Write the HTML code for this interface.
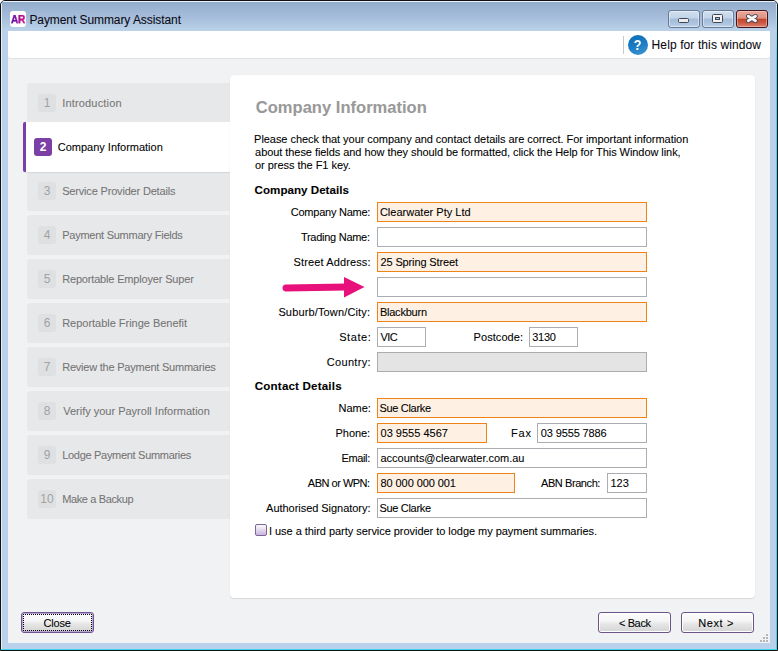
<!DOCTYPE html><html><head><meta charset="utf-8"><style>
*{margin:0;padding:0;box-sizing:border-box}
html,body{width:778px;height:651px;overflow:hidden;background:#fff}
body{font-family:"Liberation Sans",sans-serif;font-size:11px;color:#000;position:relative}
div{position:absolute}
.t{white-space:pre;line-height:13px;-webkit-text-stroke:0.08px currentColor}
.nav{left:27px;width:203px;height:40px;background:#e7e8ea;border-radius:3px 0 0 3px}
.n{width:18px;height:18px;border-radius:3px;background:#dfe0e2;color:#a2a2a2;text-align:center;line-height:18px;font-size:12px}
.nl{color:#757575}
.fld{height:20px;border:1px solid #abadb3;background:#fff}
.fld.o{border-color:#ee8418;background:#fef0e3}
.fld.g{background:#e4e4e4;border-color:#acacac}
.btn{height:21px;border:1px solid #6a5488;border-radius:3px;box-shadow:inset 0 0 0 1px #fff;background:linear-gradient(#fcfcfc,#f5f5f5 42%,#e6e6e6 58%,#d4d4d4)}
</style></head><body>
<div style="left:0;top:0;width:778px;height:651px;border:1px solid #111;border-radius:5px 5px 0 0;background:#b9d1ea"></div>
<div style="left:1px;top:1px;width:776px;height:30px;border-radius:4px 4px 0 0;background:linear-gradient(#e9f0f8 0px,#e9f0f8 1px,#93adcc 1px,#a4bcd9 50%,#bbd2ea 100%)"></div>
<div style="left:1px;top:4px;width:1px;height:646px;background:#e6eef7"></div>
<div style="left:776px;top:4px;width:1px;height:646px;background:linear-gradient(#cfe8f4,#3ad6ee 60px)"></div>
<div style="left:1px;top:649px;width:776px;height:1px;background:#3ad6ee"></div>
<div style="left:8px;top:31px;width:762px;height:612px;background:#f1f2f4"></div>
<div style="left:8px;top:31px;width:762px;height:27px;background:#fff;border-radius:0 0 3px 3px;box-shadow:0 1px 1px rgba(0,0,0,0.07)"></div>
<div style="left:10px;top:11px;width:16px;height:16px;background:#fff;border-radius:3px"></div>
<div class="t" style="left:11px;top:14px;font-size:10px;font-weight:bold;line-height:12px;letter-spacing:-0.3px;background:linear-gradient(90deg,#5a0fb0,#7d10ac 40%,#c0108e 60%,#e8107a);-webkit-background-clip:text;background-clip:text;color:transparent;-webkit-text-stroke:0.25px #7a10a0">AR</div>
<div class="t" style="left:29.4px;top:13px;letter-spacing:-0.075px;line-height:14px;font-size:12px;color:#0a0a14">Payment Summary Assistant</div>
<div style="left:668px;top:10px;width:32px;height:18px;border:1px solid #687a94;border-radius:3px;box-shadow:inset 0 0 0 1px rgba(255,255,255,0.45);background:linear-gradient(#d0deef,#c2d4e9 46%,#a3bbd8 48%,#acc3de 75%,#bcd0e8)"></div>
<div style="left:702px;top:10px;width:32px;height:18px;border:1px solid #687a94;border-radius:3px;box-shadow:inset 0 0 0 1px rgba(255,255,255,0.45);background:linear-gradient(#d0deef,#c2d4e9 46%,#a3bbd8 48%,#acc3de 75%,#bcd0e8)"></div>
<div style="left:678px;top:18px;width:11px;height:5px;background:#ececec;border:1px solid #3e4656;border-radius:1.5px"></div>
<div style="left:712px;top:14px;width:11px;height:9px;background:#f2f2f2;border:1.3px solid #3e4656;border-radius:1.5px"></div>
<div style="left:715px;top:17px;width:5px;height:3px;background:#a9c1dc;border:1px solid #3e4656"></div>
<div style="left:736px;top:10px;width:32px;height:18px;border:1px solid #43161c;border-radius:3px;box-shadow:inset 0 0 0 1px rgba(255,220,210,0.45);background:linear-gradient(#eba99b,#df9080 46%,#c0442a 49%,#c9573e 72%,#db8170)"></div>
<svg style="position:absolute;left:0;top:0" width="778" height="40"><path d="M748.3,16.3 L755.5,20.7 M755.5,16.3 L748.3,20.7" stroke="#3e4656" stroke-width="4.6" stroke-linecap="round"/><path d="M748.3,16.3 L755.5,20.7 M755.5,16.3 L748.3,20.7" stroke="#f6f6f6" stroke-width="2.8" stroke-linecap="round"/></svg>
<div style="left:623px;top:36px;width:1px;height:18px;background:#c8c8c8"></div>
<div style="left:628px;top:35px;width:20px;height:20px;border-radius:50%;background:linear-gradient(160deg,#0a6db6,#1a7cc4 50%,#4196d2)"></div>
<div class="t" style="left:632.9px;top:36.8px;font-size:15px;line-height:15px;font-weight:bold;color:#fff;transform:scaleX(0.85)">?</div>
<div class="t" style="left:651.6px;top:38px;letter-spacing:0.105px;line-height:14px;font-size:12px;color:#0a0a14">Help for this window</div>
<div class="nav" style="top:83px"></div>
<div class="n" style="left:38px;top:94px">1</div>
<div class="t" style="left:62.2px;top:97px;letter-spacing:0.173px;line-height:13px;color:#757575">Introduction</div>
<div class="nav" style="top:171px"></div>
<div class="n" style="left:38px;top:182px">3</div>
<div class="t" style="left:62.2px;top:185px;letter-spacing:-0.178px;line-height:13px;color:#757575">Service Provider Details</div>
<div class="nav" style="top:215px"></div>
<div class="n" style="left:38px;top:226px">4</div>
<div class="t" style="left:62.2px;top:229px;letter-spacing:-0.252px;line-height:13px;color:#757575">Payment Summary Fields</div>
<div class="nav" style="top:259px"></div>
<div class="n" style="left:38px;top:270px">5</div>
<div class="t" style="left:62.2px;top:273px;letter-spacing:-0.171px;line-height:13px;color:#757575">Reportable Employer Super</div>
<div class="nav" style="top:303px"></div>
<div class="n" style="left:38px;top:314px">6</div>
<div class="t" style="left:62.2px;top:317px;letter-spacing:-0.021px;line-height:13px;color:#757575">Reportable Fringe Benefit</div>
<div class="nav" style="top:347px"></div>
<div class="n" style="left:38px;top:358px">7</div>
<div class="t" style="left:62.2px;top:361px;letter-spacing:-0.219px;line-height:13px;color:#757575">Review the Payment Summaries</div>
<div class="nav" style="top:391px"></div>
<div class="n" style="left:38px;top:402px">8</div>
<div class="t" style="left:63.2px;top:405px;letter-spacing:-0.003px;line-height:13px;color:#757575">Verify your Payroll Information</div>
<div class="nav" style="top:435px"></div>
<div class="n" style="left:38px;top:446px">9</div>
<div class="t" style="left:62.2px;top:449px;letter-spacing:-0.3px;line-height:13px;color:#757575">Lodge Payment Summaries</div>
<div class="nav" style="top:479px"></div>
<div class="n" style="left:38px;top:490px">10</div>
<div class="t" style="left:62.2px;top:493px;letter-spacing:-0.375px;line-height:13px;color:#757575">Make a Backup</div>
<div style="left:23px;top:122px;width:207px;height:50px;background:#fff;border-left:3px solid #7b3fa6;border-radius:2px 0 0 2px;box-shadow:0 1px 1px rgba(0,0,0,0.08)"></div>
<div style="left:34px;top:138px;width:18px;height:18px;border-radius:3px;background:#7b3fa6;color:#fff;text-align:center;line-height:18px;font-size:12px;font-weight:bold">2</div>
<div class="t" style="left:57.8px;top:141px;letter-spacing:-0.011px;line-height:13px;">Company Information</div>
<div style="left:230px;top:75px;width:525px;height:523px;background:#fff;border-radius:4px;box-shadow:0 1px 1px rgba(0,0,0,0.10),0 0 1px rgba(0,0,0,0.10)"></div>
<div class="t" style="left:255.8px;top:98px;letter-spacing:0.028px;line-height:18px;font-size:16.5px;font-weight:bold;color:#999999">Company Information</div>
<div class="t" style="left:254.1px;top:133px;letter-spacing:-0.048px;line-height:13px;">Please check that your company and contact details are correct. For important information</div>
<div class="t" style="left:255.1px;top:146px;letter-spacing:-0.06px;line-height:13px;">about these fields and how they should be formatted, click the Help for This Window link,</div>
<div class="t" style="left:255.0px;top:159px;letter-spacing:-0.037px;line-height:13px;">or press the F1 key.</div>
<div class="t" style="left:254.6px;top:183px;letter-spacing:0.014px;line-height:13px;font-size:11.6px;font-weight:bold">Company Details</div>
<div class="t" style="left:290.8px;top:206px;letter-spacing:-0.242px;line-height:13px;">Company Name:</div>
<div class="fld o" style="left:377px;top:202px;width:270px"></div>
<div class="t" style="left:379.9px;top:206px;letter-spacing:0.018px;line-height:13px;">Clearwater Pty Ltd</div>
<div class="t" style="left:300.9px;top:231px;letter-spacing:-0.267px;line-height:13px;">Trading Name:</div>
<div class="fld " style="left:377px;top:227px;width:270px"></div>
<div class="t" style="left:293.6px;top:256px;letter-spacing:0.121px;line-height:13px;">Street Address:</div>
<div class="fld o" style="left:377px;top:252px;width:270px"></div>
<div class="t" style="left:380.5px;top:256px;letter-spacing:-0.133px;line-height:13px;">25 Spring Street</div>
<div class="fld " style="left:377px;top:277px;width:270px"></div>
<div class="t" style="left:278.4px;top:306px;letter-spacing:0.144px;line-height:13px;">Suburb/Town/City:</div>
<div class="fld o" style="left:377px;top:302px;width:270px"></div>
<div class="t" style="left:379.9px;top:306px;letter-spacing:-0.225px;line-height:13px;">Blackburn</div>
<div class="t" style="left:339.2px;top:331px;letter-spacing:0.58px;line-height:13px;">State:</div>
<div class="fld " style="left:377px;top:327px;width:49px"></div>
<div class="t" style="left:380.5px;top:331px;letter-spacing:-0.6px;line-height:13px;">VIC</div>
<div class="t" style="left:473.6px;top:331px;letter-spacing:0.062px;line-height:13px;">Postcode:</div>
<div class="fld " style="left:529px;top:327px;width:49px"></div>
<div class="t" style="left:532.3px;top:331px;letter-spacing:-0.3px;line-height:13px;">3130</div>
<div class="t" style="left:326.7px;top:356px;letter-spacing:0.343px;line-height:13px;">Country:</div>
<div class="fld g" style="left:377px;top:352px;width:270px"></div>
<div class="t" style="left:254.8px;top:379px;letter-spacing:0.171px;line-height:13px;font-size:11.6px;font-weight:bold">Contact Details</div>
<div class="t" style="left:338.5px;top:402px;letter-spacing:0.0px;line-height:13px;">Name:</div>
<div class="fld o" style="left:377px;top:398px;width:270px"></div>
<div class="t" style="left:379.5px;top:402px;letter-spacing:-0.322px;line-height:13px;">Sue Clarke</div>
<div class="t" style="left:335.6px;top:427px;letter-spacing:-0.06px;line-height:13px;">Phone:</div>
<div class="fld o" style="left:377px;top:423px;width:110px"></div>
<div class="t" style="left:380.5px;top:427px;letter-spacing:0.009px;line-height:13px;">03 9555 4567</div>
<div class="t" style="left:511.0px;top:427px;letter-spacing:0.8px;line-height:13px;">Fax</div>
<div class="fld " style="left:537px;top:423px;width:110px"></div>
<div class="t" style="left:540.8px;top:427px;letter-spacing:-0.127px;line-height:13px;">03 9555 7886</div>
<div class="t" style="left:341.4px;top:452px;letter-spacing:-0.34px;line-height:13px;">Email:</div>
<div class="fld " style="left:377px;top:448px;width:270px"></div>
<div class="t" style="left:380.5px;top:452px;letter-spacing:-0.02px;line-height:13px;">accounts@clearwater.com.au</div>
<div class="t" style="left:307.8px;top:477px;letter-spacing:-0.49px;line-height:13px;">ABN or WPN:</div>
<div class="fld o" style="left:377px;top:473px;width:138px"></div>
<div class="t" style="left:380.5px;top:477px;letter-spacing:-0.077px;line-height:13px;">80 000 000 001</div>
<div class="t" style="left:541.0px;top:477px;letter-spacing:-0.42px;line-height:13px;">ABN Branch:</div>
<div class="fld " style="left:607px;top:473px;width:40px"></div>
<div class="t" style="left:610.6px;top:477px;letter-spacing:-0.1px;line-height:13px;">123</div>
<div class="t" style="left:266.1px;top:502px;letter-spacing:-0.04px;line-height:13px;">Authorised Signatory:</div>
<div class="fld " style="left:377px;top:498px;width:270px"></div>
<div class="t" style="left:379.5px;top:502px;letter-spacing:-0.322px;line-height:13px;">Sue Clarke</div>
<div style="left:255px;top:524px;width:12px;height:12px;border:1px solid #7b6598;border-radius:2px;background:linear-gradient(#fbfafd,#e6dcf0 45%,#c9b4de)"></div>
<div class="t" style="left:269.0px;top:525px;letter-spacing:-0.041px;line-height:13px;">I use a third party service provider to lodge my payment summaries.</div>
<svg style="position:absolute;left:0;top:0" width="778" height="651"><line x1="286" y1="288" x2="346" y2="287" stroke="#e8107a" stroke-width="7" stroke-linecap="round"/><polygon points="344,277 364.5,287 344,297.5" fill="#e8107a"/></svg>
<div class="btn" style="left:21px;top:612px;width:73px;border:1px solid #6c5490;box-shadow:inset 0 0 0 1px #b9a4d4"></div>
<div style="left:23px;top:614px;width:69px;height:17px;border:1px dotted #000"></div>
<div class="t" style="left:43.6px;top:617px;letter-spacing:-0.225px;line-height:13px;">Close</div>
<div class="btn" style="left:598px;top:612px;width:73px"></div>
<div class="t" style="left:618.9px;top:617px;letter-spacing:-0.362px;line-height:13px;">&lt; Back</div>
<div class="btn" style="left:681px;top:612px;width:73px"></div>
<div class="t" style="left:698.2px;top:617px;letter-spacing:0.612px;line-height:13px;">Next &gt;</div>
<div style="left:766px;top:634px;width:2px;height:2px;background:#b4b6ba"></div>
<div style="left:763px;top:637px;width:2px;height:2px;background:#b4b6ba"></div>
<div style="left:766px;top:637px;width:2px;height:2px;background:#b4b6ba"></div>
<div style="left:760px;top:640px;width:2px;height:2px;background:#b4b6ba"></div>
<div style="left:763px;top:640px;width:2px;height:2px;background:#b4b6ba"></div>
<div style="left:766px;top:640px;width:2px;height:2px;background:#b4b6ba"></div>
</body></html>
